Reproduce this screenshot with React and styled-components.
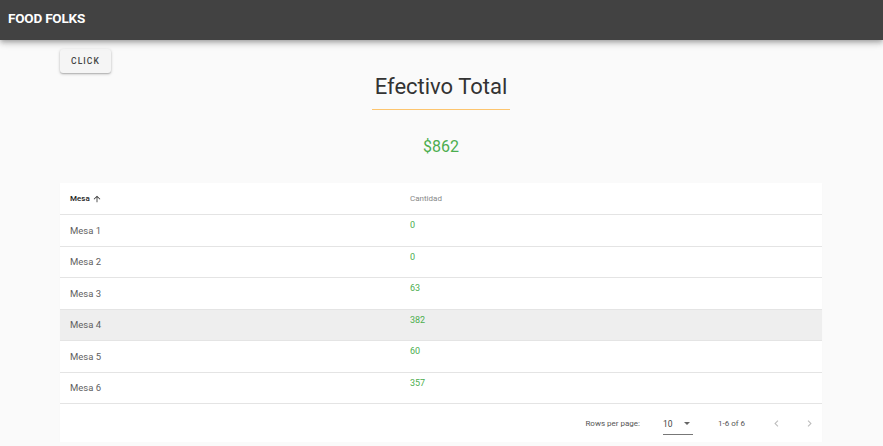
import React from "react";
import styled, { createGlobalStyle } from "styled-components";

const GlobalStyle = createGlobalStyle`
  html, body {
    margin: 0;
    padding: 0;
    background: #fafafa;
    font-family: Roboto, "Liberation Sans", sans-serif;
  }
`;

const rows = [
  { id: 1, name: "Mesa 1", amount: 0 },
  { id: 2, name: "Mesa 2", amount: 0 },
  { id: 3, name: "Mesa 3", amount: 63 },
  { id: 4, name: "Mesa 4", amount: 382 },
  { id: 5, name: "Mesa 5", amount: 60 },
  { id: 6, name: "Mesa 6", amount: 357 },
];

const App = () => {
  return (
    <>
      <GlobalStyle />
      <AppBar>
        <Brand>FOOD FOLKS</Brand>
      </AppBar>
      <Page>
        <TopRow>
          <Button>Click</Button>
        </TopRow>
        <Title>Efectivo Total</Title>
        <Divider />
        <Total>$862</Total>
        <Card>
          <HeadRow>
            <HeadCell $active>
              Mesa
              <SortIcon viewBox="0 0 24 24">
                <path d="M4 12l1.41 1.41L11 7.83V20h2V7.83l5.58 5.59L20 12l-8-8-8 8z" />
              </SortIcon>
            </HeadCell>
            <HeadCell>Cantidad</HeadCell>
          </HeadRow>
          {rows.map((row) => (
            <Row key={row.id} $hover={row.id === 4}>
              <NameCell>{row.name}</NameCell>
              <AmountCell>{row.amount}</AmountCell>
            </Row>
          ))}
          <Footer>
            <FooterText>Rows per page:</FooterText>
            <Select>
              10
              <Caret />
            </Select>
            <FooterText>1-6 of 6</FooterText>
            <PageButtons>
              <Chevron viewBox="0 0 24 24">
                <path d="M15.41 7.41L14 6l-6 6 6 6 1.41-1.41L10.83 12z" />
              </Chevron>
              <Chevron viewBox="0 0 24 24">
                <path d="M10 6L8.59 7.41 13.17 12l-4.58 4.59L10 18l6-6z" />
              </Chevron>
            </PageButtons>
          </Footer>
        </Card>
      </Page>
    </>
  );
};

export default App;

const AppBar = styled.header`
  height: 40px;
  background: #424242;
  display: flex;
  align-items: center;
  padding: 0 8px;
  box-shadow: 0 2px 4px -1px rgba(0, 0, 0, 0.2), 0 4px 5px 0 rgba(0, 0, 0, 0.14),
    0 1px 10px 0 rgba(0, 0, 0, 0.12);
  position: relative;
  z-index: 1;
`;

const Brand = styled.div`
  color: #fff;
  font-weight: 700;
  font-size: 13.5px;
  letter-spacing: -0.2px;
  margin-top: -4px;
`;

const Page = styled.main`
  padding: 8px 61px 0 60px;
  display: flex;
  flex-direction: column;
  align-items: center;
`;

const TopRow = styled.div`
  align-self: stretch;
  display: flex;
`;

const Button = styled.button`
  width: 51px;
  height: 24px;
  margin-top: 1px;
  border: none;
  border-radius: 3px;
  background: #f5f5f5;
  color: #444;
  font-family: Roboto, "Liberation Sans", sans-serif;
  font-weight: 500;
  font-size: 8.5px;
  letter-spacing: 1.1px;
  text-transform: uppercase;
  box-shadow: 0 1px 3px rgba(0, 0, 0, 0.25), 0 1px 1px rgba(0, 0, 0, 0.12);
  padding: 0;
`;

const Title = styled.h1`
  margin: -1px 0 0;
  font-weight: 400;
  font-size: 22px;
  line-height: 30px;
  color: #333;
`;

const Divider = styled.div`
  width: 138px;
  height: 0;
  border-top: 1.5px solid #fdc56e;
  margin-top: 7px;
`;

const Total = styled.div`
  margin-top: 27px;
  color: #4cae4f;
  font-size: 16px;
  line-height: 20px;
`;

const Card = styled.section`
  align-self: stretch;
  margin-top: 26px;
  background: #fff;
  box-shadow: 0 1px 1px rgba(0, 0, 0, 0.04);
`;

const HeadRow = styled.div`
  display: grid;
  grid-template-columns: 350px 1fr;
  height: 32px;
  align-items: center;
  border-bottom: 1px solid #e4e4e4;
  box-sizing: border-box;
`;

const HeadCell = styled.div`
  padding-left: ${(p) => (p.$active ? "10px" : "0")};
  font-size: 8px;
  font-weight: ${(p) => (p.$active ? 500 : 400)};
  color: ${(p) => (p.$active ? "#222" : "#888")};
  display: flex;
  align-items: center;
`;

const SortIcon = styled.svg`
  width: 10px;
  height: 10px;
  fill: #333;
  margin-left: 2px;
`;

const Row = styled.div`
  display: grid;
  grid-template-columns: 350px 1fr;
  height: 31.5px;
  box-sizing: border-box;
  background: ${(p) => (p.$hover ? "#eeeeee" : "#fff")};
  border-bottom: 1px solid #e4e4e4;
`;

const NameCell = styled.div`
  padding-left: 10px;
  font-size: 9.5px;
  color: #5f5f5f;
  align-self: center;
`;

const AmountCell = styled.div`
  align-self: start;
  padding-top: 5px;
  color: #4cae4f;
  font-size: 9px;
`;

const Footer = styled.div`
  height: 38px;
  display: flex;
  align-items: center;
  justify-content: flex-end;
  padding-right: 6px;
`;

const FooterText = styled.span`
  font-size: 8px;
  color: #555;
`;

const Select = styled.div`
  margin: 2px 25px 0 23px;
  width: 30px;
  height: 22px;
  border-bottom: 1px solid #777;
  display: flex;
  align-items: center;
  justify-content: space-between;
  font-size: 8.5px;
  color: #444;
  box-sizing: border-box;
  padding: 0 3px 0 0;
`;

const Caret = styled.span`
  width: 0;
  height: 0;
  border-left: 3px solid transparent;
  border-right: 3px solid transparent;
  border-top: 3px solid #666;
`;

const PageButtons = styled.div`
  display: flex;
  gap: 20px;
  margin-left: 25px;
`;

const Chevron = styled.svg`
  width: 13px;
  height: 13px;
  fill: #bdbdbd;
`;
